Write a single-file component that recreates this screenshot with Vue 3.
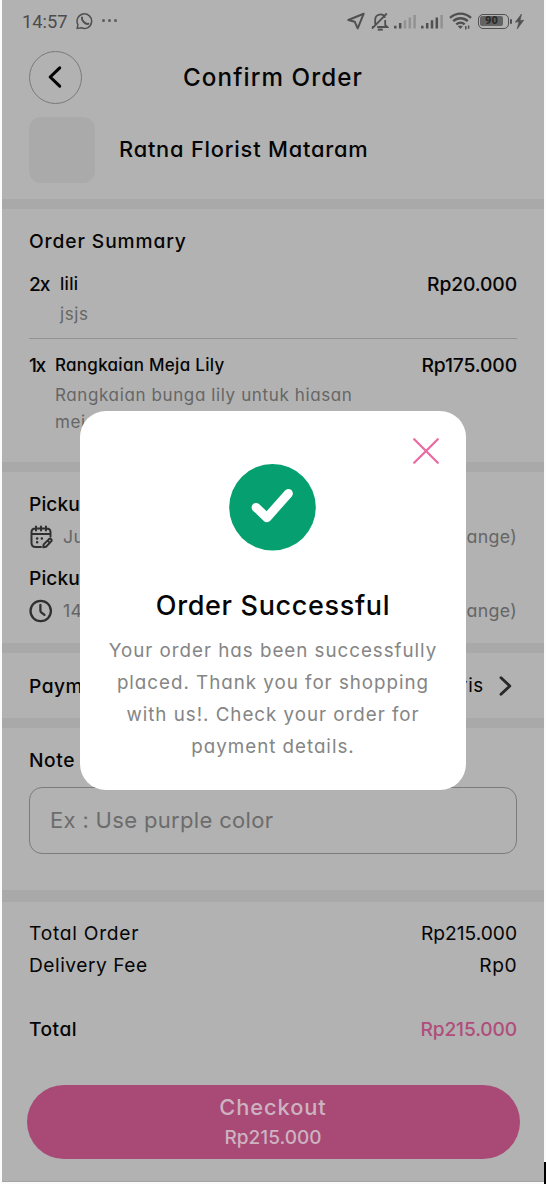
<script setup>
const items = [
  { qty: '2x', name: 'lili', lines: ['jsjs'], price: 'Rp20.000', cls: 'first' },
  { qty: '1x', name: 'Rangkaian Meja Lily', lines: ['Rangkaian bunga lily untuk hiasan', 'meja'], price: 'Rp175.000', cls: 'second' },
]
const message = [
  'Your order has been successfully',
  'placed. Thank you for shopping',
  'with us!. Check your order for',
  'payment details.',
]
</script>

<template>
  <div class="page">
    <main class="screen">
      <div class="status">
        <span class="time">14:57</span>
        <svg class="wa" width="18" height="18" viewBox="0 0 18 18" fill="none" stroke="#505050" stroke-width="1.5">
          <path d="M1.2 16.4 1.9 12.6A7.3 7.3 0 1 1 5.3 15.8Z" />
          <path d="M6 5.4c-.8 3 3.5 7.2 6.4 6.4" stroke-width="2" stroke-linecap="round" />
        </svg>
        <span class="dots"><i></i><i></i><i></i></span>
        <div class="indicators">
          <svg width="18" height="18" viewBox="0 0 18 18" fill="none" stroke="#505050" stroke-width="2" stroke-linejoin="round"><path d="M1.3 8 16.7 1.7 10.7 16.4 7.8 9.8Z" /></svg>
          <svg class="bell" width="18" height="19" viewBox="0 0 18 19" fill="none" stroke="#505050" stroke-width="1.8"><path d="M4.2 12.5V7.8C4.2 1.5 12.5.7 14 5.8M14.2 8v5l2 2H6.2M1 16.6 15.8 1.5M2.2 15H1" /><path d="M6.8 17.6h5" stroke-width="2" /></svg>
          <svg class="sig" width="22" height="16" viewBox="0 0 22 16" stroke-width="2.5"><path d="M1.3 12.8v2.6M6.2 10v5.4" stroke="#505050" /><path d="M11 7.3v8.1M15.8 4.6v10.8M20.6 2v13.4" stroke="#929292" /></svg>
          <svg class="sig" width="22" height="16" viewBox="0 0 22 16" stroke-width="2.5"><path d="M1.3 12.8v2.6M6.2 10v5.4M11 7.3v8.1M15.8 4.6v10.8" stroke="#505050" /><path d="M20.6 2v13.4" stroke="#929292" /></svg>
          <svg class="wifi" width="23" height="18" viewBox="0 0 23 18" fill="none" stroke="#505050" stroke-width="2.4"><path d="M1 5.8C7.2.2 15.8.2 22 5.8M4.2 9.2c4.3-4 10.3-4 14.6 0M7.3 12.4c2.5-2.3 5.9-2.3 8.4 0" /><path d="M8.8 14.3 11.5 17l2.3-2.7c-1.4-1.1-3.6-1.1-5 0Z" fill="#505050" stroke="none" /><path d="M16.8 14v3.4M19.6 13.4v3.4" stroke-width="1.5" /></svg>
          <span class="battery"><b>90</b></span>
          <svg class="bolt" width="9" height="15" viewBox="0 0 9 15"><path d="M6.5 0 .2 8.3 4 7.6 2.2 15 8.8 6.1 5 6.8Z" fill="#505050" stroke="#505050" stroke-width=".6" /></svg>
        </div>
      </div>

      <header class="header">
        <button class="back" aria-label="Back">
          <svg width="16" height="24" viewBox="0 0 16 24" fill="none" stroke="#050505" stroke-width="3.1" stroke-linecap="round" stroke-linejoin="round"><path d="M12.7 2.8 3.2 12l9.5 9.2" /></svg>
        </button>
        <h1>Confirm Order</h1>
      </header>

      <section class="store">
        <div class="thumb"></div>
        <h2>Ratna Florist Mataram</h2>
      </section>
      <div class="band"></div>

      <section class="summary">
        <h3 class="label">Order Summary</h3>
        <article v-for="item in items" :key="item.name" class="item" :class="item.cls">
          <span class="qty">{{ item.qty }}</span>
          <div class="desc">
            <h4>{{ item.name }}</h4>
            <p v-for="line in item.lines" :key="line">{{ line }}</p>
          </div>
          <span class="price">{{ item.price }}</span>
        </article>
      </section>
      <div class="band"></div>

      <section class="pickup">
        <h3 class="label">Pickup Date</h3>
        <div class="slot">
          <svg width="24" height="24" viewBox="0 0 24 24" fill="none" stroke="#303030" stroke-width="2" stroke-linecap="round" stroke-linejoin="round">
            <path d="M7 1.5v4M12 1.5v4M17 1.5v4M2.5 9h19M21.5 11.5V7.2c0-2.4-1.2-3.8-3.8-3.8H6.3C3.7 3.4 2.5 4.8 2.5 7.2v10.6c0 3 1.5 4.2 4.2 4.2H12" />
            <path d="m20 14.1-5.3 5.3-.5 2.8 2.8-.5 5.2-5.3c1.3-1.4-.8-3.6-2.2-2.3ZM18.6 15.6l2.1 2" />
            <path d="M8.1 13.5h.1M12.8 13.5h.1M8.1 17.3h.1" stroke-width="2.5" />
          </svg>
          <span>June 20</span><span class="change">(change)</span>
        </div>
        <h3 class="label time-label">Pickup Time</h3>
        <div class="slot">
          <svg width="24" height="24" viewBox="0 0 24 24" fill="none" stroke="#303030" stroke-width="2.3" stroke-linecap="round"><circle cx="11.7" cy="12" r="10.2" /><path d="M11.4 6v5.6c0 .8.2 1.2.8 1.7l3.3 2.5" /></svg>
          <span>14:00</span><span class="change">(change)</span>
        </div>
      </section>
      <div class="band"></div>

      <section class="payment">
        <h3 class="label">Payment</h3>
        <span class="method">Qris</span>
        <svg width="13" height="20" viewBox="0 0 13 20" fill="none" stroke="#292929" stroke-width="2.9" stroke-linecap="round" stroke-linejoin="round"><path d="m2 1.8 8.8 8.2L2 18.2" /></svg>
      </section>
      <div class="band"></div>

      <section class="note">
        <h3 class="label">Note</h3>
        <div class="field">Ex : Use purple color</div>
      </section>
      <div class="band thick"></div>

      <section class="totals">
        <div class="row"><span class="to">Total Order</span><span class="amount">Rp215.000</span></div>
        <div class="row"><span>Delivery Fee</span><span>Rp0</span></div>
        <div class="row grand"><span>Total</span><span class="pink">Rp215.000</span></div>
      </section>

      <button class="checkout">
        <span class="cta">Checkout</span>
        <span class="sum">Rp215.000</span>
      </button>
    </main>

    <div class="dialog" role="dialog">
      <svg class="close" width="28" height="28" viewBox="0 0 28 28" fill="none" stroke="#eb6ba3" stroke-width="2.3" stroke-linecap="round"><path d="m2.2 2.2 23.6 23.6M25.8 2.2 2.2 25.8" /></svg>
      <svg class="check" width="88" height="88" viewBox="0 0 88 88" fill="none"><circle cx="43.5" cy="44.3" r="43.3" fill="#069f6f" /><path d="m27.1 44.4 10.8 10.3L59.4 30.4" stroke="#fff" stroke-width="9" stroke-linecap="round" stroke-linejoin="round" /></svg>
      <h2>Order Successful</h2>
      <div class="message"><p v-for="line in message" :key="line">{{ line }}</p></div>
    </div>
    <div class="caret"></div>
  </div>
</template>

<style>
body { background: #fff; }
</style>

<style scoped>
* { box-sizing: border-box; }
h1, h2, h3, h4, p { margin: 0; font-weight: 500; }
button { padding: 0; font: inherit; }
svg { display: block; flex: none; }
.page {
  position: relative; width: 546px; height: 1184px; padding: 0 2px; overflow: hidden; background: #fbfbfb;
  font-family: Inter, "Open Sans", sans-serif; font-feature-settings: "cv11"; color: #050505; white-space: nowrap;
}
.screen { height: 1182px; background: #b2b2b2; border-bottom: 1px solid #a4a4a4; }

.status { display: flex; align-items: center; height: 43px; padding: 0 20px; color: #4c4c4c; }
.time { width: 46px; font: 400 18.3px Roboto, sans-serif; }
.wa { margin-left: 8px; margin-top: -1px; }
.dots { display: flex; gap: 3px; margin-left: 8px; margin-top: -2px; }
.dots i { width: 3px; height: 3px; border-radius: 50%; background: #5c5c5c; }
.indicators { display: flex; align-items: center; margin-left: auto; margin-top: -1px; }
.bell { margin-left: 6px; }
.sig { margin-left: 5px; }
.wifi { margin-left: 6px; }
.battery {
  position: relative; width: 31px; height: 15px; margin-left: 6px; padding: 1px; border: 1.5px solid #505050; border-radius: 5px;
  font: 700 11px/10px Roboto, sans-serif; text-align: center; color: #2b2b2b;
}
.battery b { display: block; width: 23px; height: 10px; border-radius: 2px; background: #636363; }
.battery::after { content: ""; position: absolute; right: -4px; top: 4px; width: 2px; height: 5px; border-radius: 1px; background: #505050; }
.bolt { margin-left: 6px; }

.header { display: flex; align-items: center; justify-content: center; position: relative; height: 68px; }
.header h1 { font-size: 24.2px; letter-spacing: 1.1px; }
.back {
  position: absolute; left: 27px; top: 8px; width: 53px; height: 53px; display: flex; align-items: center; justify-content: center;
  border: 1.3px solid #7a7a7a; border-radius: 50%; background: none;
}
.back svg { margin-right: 1px; margin-top: -1px; }
.store { display: flex; align-items: flex-start; height: 88px; padding: 6px 26px 0 27px; }
.thumb { width: 66px; height: 66px; border-radius: 12px; background: #aaa; }
.store h2 { margin-left: 24px; font-size: 21.8px; line-height: 65px; letter-spacing: .8px; }
.band { height: 10px; background: #a9a9a9; }
.label { font-size: 19.2px; line-height: 30px; letter-spacing: .9px; }

.summary { height: 253px; padding: 17px 27px 0; }
.item { display: flex; line-height: 30px; }
.item.first { height: 70px; margin-top: 13px; border-bottom: 1px solid #939393; }
.item.second { margin-top: 11px; }
.qty { width: 31px; font-size: 19.2px; font-weight: 500; letter-spacing: -1px; }
.second .qty { width: 26px; letter-spacing: -1.5px; }
.desc { flex: 1; }
.desc h4 { margin-bottom: 2px; font-size: 17px; letter-spacing: .28px; }
.desc p { font-size: 17px; font-weight: 400; line-height: 27px; letter-spacing: .62px; color: #666; }
.price { font-size: 19.3px; font-weight: 500; letter-spacing: -.12px; }

.pickup { height: 171px; padding: 17px 27px 0; }
.pickup .label { letter-spacing: .1px; }
.slot { display: flex; align-items: center; height: 35px; font-size: 17.8px; color: #666; letter-spacing: .3px; }
.slot span { margin-left: 10px; }
.slot .change { margin-left: auto; }
.time-label { margin-top: 9px; }
.payment { display: flex; align-items: center; height: 65px; padding: 0 32px 0 27px; }
.payment .label { letter-spacing: .5px; }
.method { margin-left: auto; margin-right: 15px; font-size: 18.8px; letter-spacing: .7px; }
.note { height: 162px; padding: 17px 27px 0; }
.note .label { line-height: 31px; letter-spacing: .6px; }
.field {
  height: 67px; margin-top: 11px; padding-left: 20px; border: 1.3px solid #7c7c7c; border-radius: 13px;
  font-size: 22px; line-height: 64px; letter-spacing: .33px; color: #6c6c6c;
}
.thick { height: 12px; }
.totals { padding: 15px 27px 0; }
.row { display: flex; justify-content: space-between; height: 32px; line-height: 32px; font-size: 19.2px; letter-spacing: .5px; }
.row .to { letter-spacing: .75px; }
.row .amount { letter-spacing: 0; }
.row .pink { color: #b04d7b; letter-spacing: -.15px; }
.grand { margin-top: 32px; font-weight: 500; }
.checkout {
  display: flex; flex-direction: column; align-items: center; width: 493px; height: 74px; margin: 40px auto 0; padding-top: 7px;
  border: 0; border-radius: 37px; background: #a84a75; color: #cdb3c1; font-weight: 500;
}
.cta { font-size: 21.8px; line-height: 30px; letter-spacing: .95px; }
.sum { font-size: 19px; line-height: 31px; }

.dialog { position: absolute; left: 80px; top: 411px; width: 386px; height: 379px; padding-top: 52px; border-radius: 26px; background: #fff; text-align: center; }
.close { position: absolute; right: 26px; top: 26px; }
.check { margin: 0 auto; }
.dialog h2 { margin-top: 37px; font-size: 27px; line-height: 36px; letter-spacing: .65px; }
.message { margin-top: 11px; color: #858585; font-size: 18.8px; line-height: 32px; letter-spacing: .97px; }
.message p { font-weight: 400; }
.caret { position: absolute; right: 0; top: 1162px; width: 2px; height: 22px; background: #000; }
</style>
